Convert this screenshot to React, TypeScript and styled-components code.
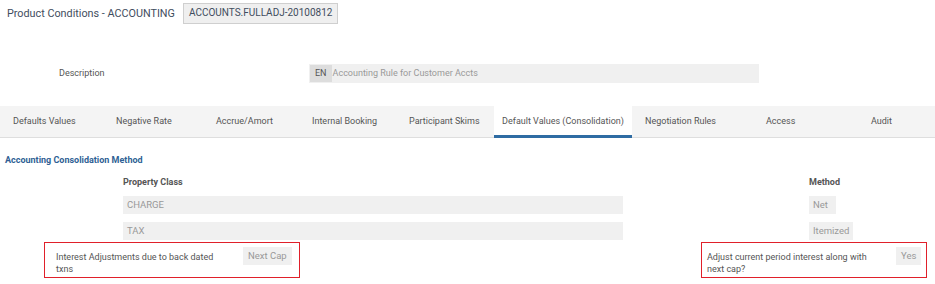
import styled, { createGlobalStyle } from 'styled-components'

const GlobalStyle = createGlobalStyle`
  html, body {
    margin: 0;
    padding: 0;
    background: #fff;
    font-family: Roboto, "Liberation Sans", Arial, sans-serif;
    color: #555;
  }
`

const Page = styled.div`
  width: 935px;
  height: 284px;
  overflow: hidden;
`

const Header = styled.div`
  display: flex;
  align-items: center;
  height: 26px;
  padding: 0 0 0 7px;
`

const Title = styled.div`
  font-size: 10.8px;
  color: #3f4d5e;
  margin-right: 8px;
`

const CodeBox = styled.div`
  height: 19px;
  line-height: 18px;
  padding: 0 5px;
  background: #efefef;
  border: 1px solid #cfcfcf;
  font-size: 10px;
  color: #3f4d5e;
`

const DescRow = styled.div`
  display: flex;
  align-items: center;
  height: 20px;
  margin-top: 37px;
`

const DescLabel = styled.div`
  width: 250px;
  padding-left: 59px;
  font-size: 9px;
  color: #555;
`

const DescInput = styled.div`
  display: flex;
  align-items: center;
  width: 450px;
  height: 19px;
  background: #f0f0f0;
  font-size: 9px;
  color: #999;
`

const LangChip = styled.span`
  height: 17px;
  line-height: 16px;
  padding: 0 5px;
  margin: 0 1px;
  background: #dddddd;
  color: #555;
`

const Tabs = styled.div`
  display: flex;
  height: 31px;
  margin-top: 23px;
  background: #f4f4f4;
  border-bottom: 1px solid #dedede;
`

const Tab = styled.div<{ $w: number; $active?: boolean }>`
  box-sizing: border-box;
  flex: 0 0 ${p => p.$w}px;
  display: flex;
  align-items: center;
  justify-content: ${p => (p.$active ? 'center' : 'flex-start')};
  padding-left: ${p => (p.$active ? 0 : 13)}px;
  white-space: nowrap;
  font-size: 9px;
  color: #555;
  background: ${p => (p.$active ? '#fff' : 'transparent')};
  border-bottom: 3px solid ${p => (p.$active ? '#2f6ca3' : 'transparent')};
  margin-bottom: -1px;
`

const SectionTitle = styled.div`
  margin: 17px 0 0 5px;
  font-size: 9px;
  font-weight: 700;
  color: #2e5f94;
`

const Grid = styled.div`
  display: grid;
  grid-template-columns: 123px 500px 186px 1fr;
  margin-top: 12px;
`

const ColHead = styled.div<{ $col: number }>`
  grid-column: ${p => p.$col};
  font-size: 9px;
  font-weight: 700;
  color: #555;
  height: 14px;
  margin-bottom: 5px;
`

const Field = styled.div<{ $col: number; $w?: number }>`
  grid-column: ${p => p.$col};
  box-sizing: border-box;
  width: ${p => (p.$w ? `${p.$w}px` : '100%')};
  height: 18px;
  line-height: 18px;
  padding-left: 4px;
  background: #f0f0f0;
  font-size: 9.5px;
  color: #999;
  margin-bottom: 8px;
`

const BottomRow = styled.div`
  display: flex;
  justify-content: space-between;
  margin-top: -6px;
  padding: 0 8px 0 44px;
`

const Flag = styled.div<{ $w: number; $pad: number }>`
  box-sizing: border-box;
  width: ${p => p.$w}px;
  height: 36px;
  border: 1px solid #e0202a;
  display: flex;
  align-items: flex-start;
  padding: 4px 4px 0 ${p => p.$pad}px;
`

const FlagText = styled.div<{ $w: number; $gap: number }>`
  box-sizing: border-box;
  flex: 0 0 ${p => p.$w}px;
  padding: 4px ${p => p.$gap}px 0 0;
  font-size: 9px;
  line-height: 12px;
  color: #555;
`

const Chip = styled.div`
  height: 18px;
  line-height: 18px;
  padding: 0 5px;
  white-space: nowrap;
  background: #f0f0f0;
  font-size: 9.5px;
  color: #999;
`

const tabs: [string, number][] = [
  ['Defaults Values', 103],
  ['Negative Rate', 100],
  ['Accrue/Amort', 96],
  ['Internal Booking', 97],
  ['Participant Skims', 98],
  ['Default Values (Consolidation)', 138],
  ['Negotiation Rules', 121],
  ['Access', 105],
  ['Audit', 77],
]

export default function App() {
  return (
    <Page>
      <GlobalStyle />
      <Header>
        <Title>Product Conditions - ACCOUNTING</Title>
        <CodeBox>ACCOUNTS.FULLADJ-20100812</CodeBox>
      </Header>
      <DescRow>
        <DescLabel>Description</DescLabel>
        <DescInput>
          <LangChip>EN</LangChip>
          Accounting Rule for Customer Accts
        </DescInput>
      </DescRow>
      <Tabs>
        {tabs.map(([label, w]) => (
          <Tab key={label} $w={w} $active={label === 'Default Values (Consolidation)'}>
            {label}
          </Tab>
        ))}
      </Tabs>
      <SectionTitle>Accounting Consolidation Method</SectionTitle>
      <Grid>
        <ColHead $col={2}>Property Class</ColHead>
        <ColHead $col={4}>Method</ColHead>
        <Field $col={2}>CHARGE</Field>
        <Field $col={4} $w={27}>Net</Field>
        <Field $col={2}>TAX</Field>
        <Field $col={4} $w={44}>Itemized</Field>
      </Grid>
      <BottomRow>
        <Flag $w={256} $pad={11}>
          <FlagText $w={187} $gap={19}>Interest Adjustments due to back dated txns</FlagText>
          <Chip>Next Cap</Chip>
        </Flag>
        <Flag $w={226} $pad={5}>
          <FlagText $w={189} $gap={23}>Adjust current period interest along with next cap?</FlagText>
          <Chip>Yes</Chip>
        </Flag>
      </BottomRow>
    </Page>
  )
}
